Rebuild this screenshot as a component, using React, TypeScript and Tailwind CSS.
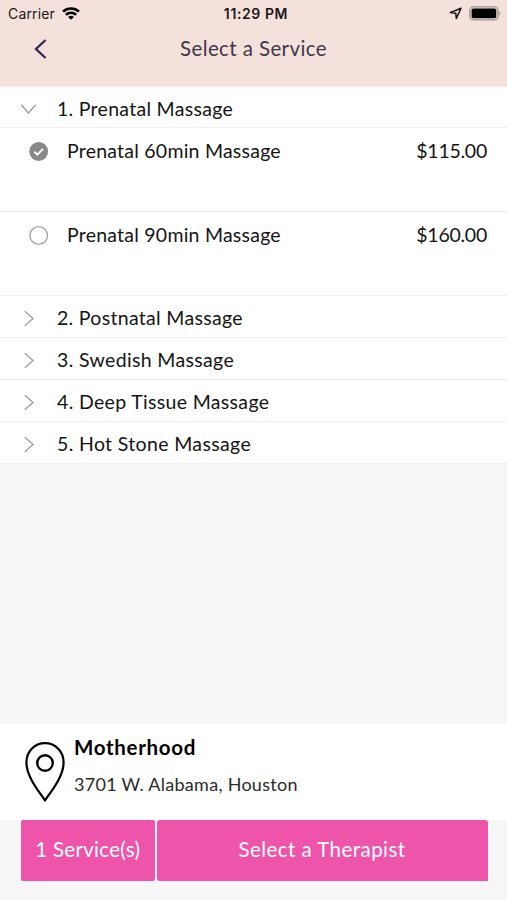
import React, { useState } from 'react';
import clsx from 'clsx';

interface Option {
  name: string;
  price: string;
}

interface Category {
  title: string;
  tracking: string;
  options: Option[];
}

const CATEGORIES: Category[] = [
  {
    title: '1. Prenatal Massage',
    tracking: 'tracking-[0.29px]',
    options: [
      { name: 'Prenatal 60min Massage', price: '$115.00' },
      { name: 'Prenatal 90min Massage', price: '$160.00' },
    ],
  },
  { title: '2. Postnatal Massage', tracking: 'tracking-[0.31px]', options: [] },
  { title: '3. Swedish Massage', tracking: 'tracking-[0.34px]', options: [] },
  { title: '4. Deep Tissue Massage', tracking: 'tracking-[0.33px]', options: [] },
  { title: '5. Hot Stone Massage', tracking: 'tracking-[0.35px]', options: [] },
];

const StatusBar: React.FC = () => (
  <div className="grid h-[27px] grid-cols-3 items-center pl-2 pr-[6px] font-['Inter',sans-serif] text-[#1c1718]">
    <div className="flex items-center gap-[7px]">
      <span className="text-[14px] tracking-[0.15px]">Carrier</span>
      <svg width="18" height="13" viewBox="0 0 17 13" preserveAspectRatio="none" fill="none" stroke="#000" strokeWidth="2.5">
        <path d="M1 4.6a10.6 10.6 0 0 1 15 0" />
        <path d="M3.7 7.8a6.8 6.8 0 0 1 9.6 0" />
        <path d="M8.5 12.8 5.8 10a3.9 3.9 0 0 1 5.4 0z" fill="#000" stroke="none" />
      </svg>
    </div>
    <span className="pl-[3px] text-center text-[14px] font-semibold tracking-[0.6px] whitespace-nowrap">11:29 PM</span>
    <div className="flex items-center justify-end gap-[7px]">
      <svg width="13" height="13" viewBox="0 0 13 13" fill="none" stroke="#111" strokeWidth="1.5" strokeLinejoin="round">
        <path d="M12 1.2 1.3 5.6l5.5.7.5 5.2z" />
      </svg>
      <svg width="32" height="15" viewBox="0 0 32 15">
        <rect x="0.9" y="0.9" width="28" height="13" rx="3.6" fill="none" stroke="#9c9490" strokeWidth="1.4" />
        <rect x="2.6" y="2.6" width="24.6" height="9.6" rx="1.6" fill="#000" />
        <path d="M30.2 5.4v4c1.6-.6 1.6-3.4 0-4z" fill="#9c9490" />
      </svg>
    </div>
  </div>
);

const Chevron: React.FC<{ open: boolean }> = ({ open }) => (
  <svg width="18" height="18" viewBox="0 0 18 18" fill="none" stroke="#a3a3a3" strokeWidth="1.5" className={clsx('shrink-0', open && 'rotate-90')}>
    <path d="M4.8 2.3 13 9.5l-8.2 7.2" />
  </svg>
);

const Radio: React.FC<{ checked: boolean }> = ({ checked }) => (
  <svg width="20" height="20" viewBox="0 0 20 20" fill="none" className="shrink-0">
    {checked ? (
      <>
        <circle cx="9.7" cy="9.5" r="9.4" fill="#888" />
        <path d="m5.3 9.7 3 2.9 5.8-5.8" stroke="#fff" strokeWidth="1.9" />
      </>
    ) : (
      <circle cx="9.7" cy="9.5" r="8.8" stroke="#a0a0a0" strokeWidth="1.3" />
    )}
  </svg>
);

export default function App() {
  const [openIndex, setOpenIndex] = useState(0);
  const [selected, setSelected] = useState('Prenatal 60min Massage');

  return (
    <div className="flex h-[900px] w-[507px] flex-col overflow-hidden bg-[#f6f6f6] font-['Lato',sans-serif] text-[19.5px] leading-6 text-[#141414]">
      <header className="h-[86px] shrink-0 bg-[#f4e1db]">
        <StatusBar />
        <div className="grid h-[43px] grid-cols-[80px_1fr_80px] items-center text-[20.5px] text-[#40374d]">
          <button className="pl-[33px]">
            <svg width="15" height="22" viewBox="0 0 15 22" fill="none" stroke="#33294a" strokeWidth="2.3">
              <path d="M12.6 2 3 11l9.6 9" />
            </svg>
          </button>
          <h1 className="pb-px text-center tracking-[0.4px]">Select a Service</h1>
        </div>
      </header>

      <div className="shrink-0 border-t border-[#faf0e8]">
        {CATEGORIES.map((category, i) => (
          <div key={category.title}>
            <button
              onClick={() => setOpenIndex(openIndex === i ? -1 : i)}
              className={clsx(
                'flex w-full items-center gap-[19px] border-b border-[#f0f0f0] bg-white pl-5 text-left',
                i === 0 ? 'h-[41px] pt-[3px]' : 'h-[42px] pt-[2px]',
              )}
            >
              <Chevron open={openIndex === i} />
              <span className={category.tracking}>{category.title}</span>
            </button>
            {openIndex === i &&
              category.options.map((option) => (
                <button
                  key={option.name}
                  onClick={() => setSelected(option.name)}
                  className="flex h-[84px] w-full items-start border-b border-[#f0f0f0] bg-white pt-[11px] pl-[29px] pr-5 text-left"
                >
                  <span className="mt-[3px]">
                    <Radio checked={selected === option.name} />
                  </span>
                  <span className="ml-[18px] flex-1 tracking-[0.23px]">{option.name}</span>
                  <span className="tracking-[-0.25px]">{option.price}</span>
                </button>
              ))}
          </div>
        ))}
      </div>

      <footer className="mt-auto shrink-0">
        <div className="flex h-24 items-start bg-white pl-6">
          <svg width="42" height="62" viewBox="0 0 42 62" fill="none" stroke="#000" strokeWidth="2.2" className="mt-[17px] shrink-0" strokeLinejoin="round">
            <path d="M21 59.5C17 53 2.4 36.5 2.4 21.5 2.4 10.5 10.5 2.2 21 2.2s18.6 8.3 18.6 19.3C39.6 36.5 25 53 21 59.5z" />
            <circle cx="21" cy="22" r="7.8" strokeWidth="2.4" />
          </svg>
          <div className="pt-[11px] pl-2">
            <p className="text-[20.5px] font-bold tracking-[0.7px] text-black">Motherhood</p>
            <p className="mt-[13px] text-[18px] tracking-[0.28px] text-[#2b2b2b]">3701 W. Alabama, Houston</p>
          </div>
        </div>
        <div className="flex h-20 items-start gap-[1.5px] pl-[20.5px] pr-[19.5px] text-[20.5px] text-white">
          <button className="h-[61px] w-[134.5px] rounded-[2px] bg-[#ed54aa] pb-1 tracking-[0.3px]">1 Service(s)</button>
          <button className="h-[61px] flex-1 rounded-[3px] rounded-br-none bg-[#ed54aa] pb-1 tracking-[0.45px]">Select a Therapist</button>
        </div>
      </footer>
    </div>
  );
}
